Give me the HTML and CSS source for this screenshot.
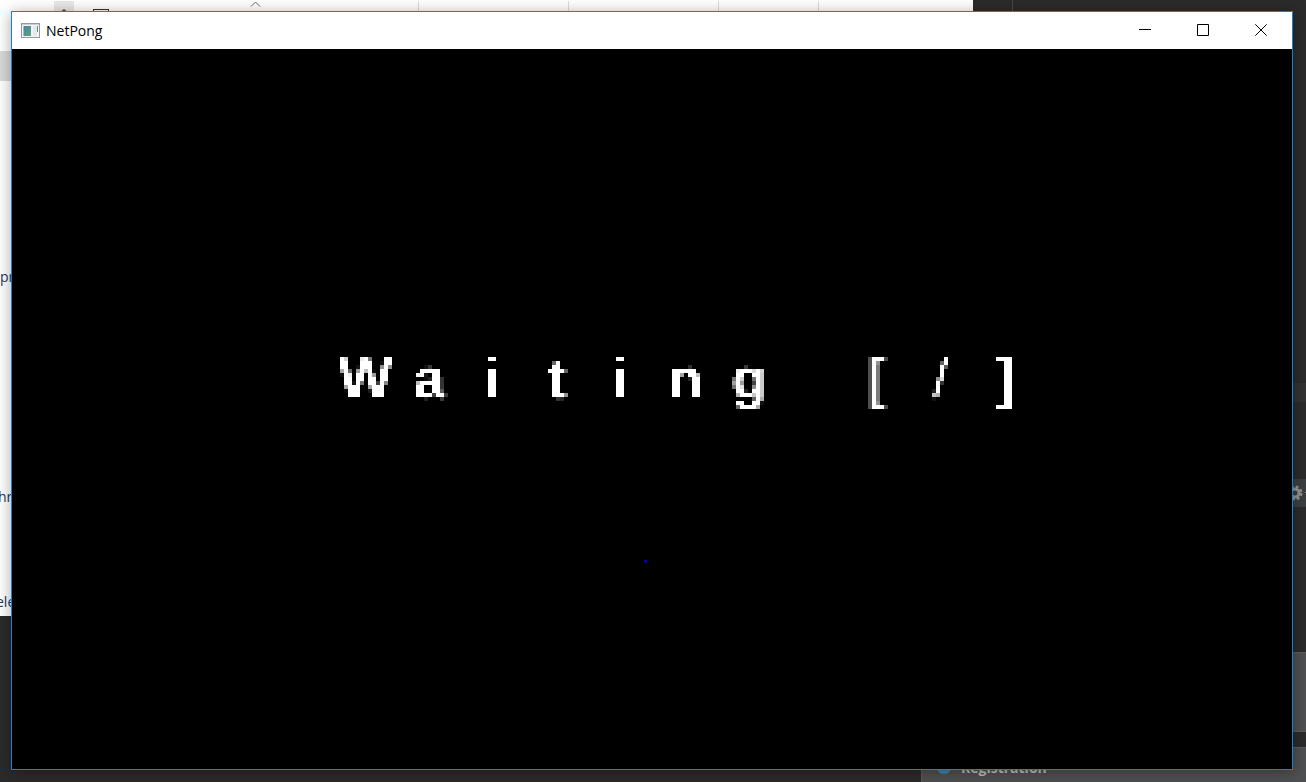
FILE: index.html
```html
<!DOCTYPE html>
<html lang="en">
<head>
<meta charset="utf-8">
<title>NetPong</title>
<link rel="stylesheet" href="styles.css">
</head>
<body>
<svg class="defs" width="0" height="0" aria-hidden="true">
  <!-- Averages 4x4 blocks, keeps one sample of each and spreads it over its block -->
  <filter id="pixel" filterUnits="userSpaceOnUse" primitiveUnits="userSpaceOnUse" x="0" y="-1" width="4000" height="80" color-interpolation-filters="sRGB">
    <feConvolveMatrix in="SourceGraphic" order="4" targetX="1" targetY="1" divisor="16" kernelMatrix="1 1 1 1 1 1 1 1 1 1 1 1 1 1 1 1"/>
    <feComponentTransfer result="average"><feFuncA type="linear" slope="2.4" intercept="-0.65"/></feComponentTransfer>
    <feFlood x="1" y="4" width="1" height="1" flood-color="#fff" result="dot"/>
    <feOffset in="dot" dx="0" dy="0" x="0" y="3" width="4" height="4"/>
    <feTile result="grid"/>
    <feComposite in="average" in2="grid" operator="in"/>
    <feConvolveMatrix order="4" targetX="2" targetY="2" divisor="1" kernelMatrix="1 1 1 1 1 1 1 1 1 1 1 1 1 1 1 1"/>
  </filter>
</svg>
<main class="desktop">
  <section class="explorer" aria-label="Files">
    <div class="columns">
      <span class="scroll"><svg width="20" height="12" viewBox="0 0 20 12"><path d="M5 12 L10 8 L15 12Z" fill="#505050"/></svg></span>
      <span class="check"></span>
      <svg class="sort" width="11" height="6" viewBox="0 0 11 6"><path d="M1 5.5 L5.500 1 L10 5.500" fill="none" stroke="#666"/></svg>
      <i class="line line-1"></i><i class="line line-2"></i><i class="line line-3"></i><i class="line line-4"></i>
    </div>
    <div class="selected"></div>
    <span class="label label-1">pr</span>
    <span class="label label-2">hr</span>
    <span class="label label-3">ele</span>
  </section>
  <div class="divider"></div>
  <div class="strip"></div>
  <div class="tools">
    <svg width="22" height="18" viewBox="0 0 22 18"><g fill="none" stroke="#929292"><circle cx="6" cy="9" r="4" stroke-width="3"/><circle cx="6" cy="9" r="6" stroke-width="3" stroke-dasharray="2.600 2.112"/></g><path d="M16 8h4v1h-4z" fill="#929292"/></svg>
  </div>
  <div class="notice notice-top"></div>
  <section class="notice notice-bottom">
    <svg width="16" height="16" viewBox="0 0 16 16"><circle cx="8" cy="8" r="8" fill="#3d84b0"/><path d="M7 3h2v2H7zM7 7h2v5H7z" fill="#eee"/></svg>
    <strong>Registration</strong>
  </section>

  <section class="window">
    <header class="titlebar">
      <svg class="app-icon" width="19" height="16" viewBox="0 0 19 16"><path d="M0 0h19v15H0z" fill="#9299a3"/><path d="M1 2h17v12H1z" fill="#f3f5f5"/><path d="M1 1h17v1H1z" fill="#c9ced3"/><path d="M2 3h8v10H2z" fill="#aab9bd"/><path d="M3 3h7v10H3z" fill="url(#screen)"/><path d="M12 3h4v10h-4z" fill="#e5e9ea"/><path d="M16 3h1v6h-1z" fill="#5a9692"/><defs><linearGradient id="screen" x2="1" y2="1"><stop stop-color="#4b83a6"/><stop offset="1" stop-color="#59a579"/></linearGradient></defs></svg>
      <span class="title">NetPong</span>
      <button class="control" aria-label="Minimize"><svg width="12" height="12" viewBox="0 0 12 12"><path d="M0 5h12v1H0z"/></svg></button>
      <button class="control" aria-label="Maximize"><svg width="12" height="12" viewBox="0 0 12 12"><path d="M.5 .5h11v11H.5z" fill="none" stroke="#000"/></svg></button>
      <button class="control" aria-label="Close"><svg width="12" height="12" viewBox="0 0 12 12"><path d="M.3 .3 L11.700 11.700 M11.700 .3 L.3 11.700" fill="none" stroke="#000"/></svg></button>
    </header>
    <div class="court">
      <h1 class="status"><span class="first">W</span><span>a</span><span>i</span><span>t</span><span>i</span><span>n</span><span>g</span><span> </span><span>[</span><span class="spinner">/</span><span>]</span></h1>
      <svg class="ball" width="3" height="3" viewBox="0 0 3 3"><path d="M0 0h3v3H0z" fill="#000070"/><path d="M1 0h1v3H1zM0 1h3v1H0z" fill="#0000c8"/></svg>
    </div>
  </section>
</main>
</body>
</html>
```
FILE: styles.css
```css
* { box-sizing: border-box; }
body { margin: 0; }
.defs { position: absolute; }
.desktop {
  position: relative;
  height: 100vh;
  overflow: hidden;
  background: #2b2b2b;
  font-family: "Open Sans", "Noto Sans", sans-serif;
}
.explorer {
  position: absolute;
  top: 0;
  left: 0;
  width: 973px;
  height: 616px;
  background: #fff;
}
.columns { position: relative; height: 12px; }
.scroll { position: absolute; left: 54px; top: 1px; width: 20px; height: 12px; background: #e8e8e8; }
.scroll svg { display: block; }
.check { position: absolute; left: 93px; top: 9px; width: 16px; height: 16px; border: 1px solid #333; }
.sort { position: absolute; left: 250px; top: 1px; }
.line { position: absolute; top: 1px; width: 1px; height: 12px; background: #dcdcdc; }
.line-1 { left: 418px; }
.line-2 { left: 568px; }
.line-3 { left: 718px; }
.line-4 { left: 818px; }
.selected { position: absolute; left: 0; top: 51px; width: 40px; height: 30px; background: #d9d9d9; }
.label { position: absolute; font-size: 14px; line-height: 20px; color: #1e395b; }
.label-1 { left: 0; top: 267px; }
.label-2 { left: -2px; top: 487px; }
.label-3 { left: -4px; top: 592px; }
.divider { position: absolute; left: 1012px; top: 0; width: 1px; height: 12px; background: #484848; }
.strip { position: absolute; right: 0; top: 383px; width: 20px; height: 19px; background: #333; }
.tools { position: absolute; right: 0; top: 479px; width: 17px; height: 28px; padding-top: 5px; background: #3c3f41; }
.tools svg { display: block; }
.notice { position: absolute; right: 0; background: #4e5052; border: 1px solid #5a5c5e; border-right: 0; }
.notice-top { top: 652px; width: 385px; height: 80px; }
.notice-bottom {
  top: 747px;
  width: 385px;
  height: 80px;
  display: flex;
  align-items: flex-start;
  gap: 9px;
  padding: 10px 14px;
  color: #bbb;
  font-size: 14px;
  line-height: 20px;
}
.window {
  position: absolute;
  inset: 11px 13px 12px 11px;
  display: flex;
  flex-direction: column;
  border: 1px solid #1b7fd4;
  background: #000;
  box-shadow: 0 2px 14px rgba(0, 0, 0, .35);
}
.titlebar { display: flex; align-items: center; height: 37px; padding: 0 2px 0 9px; background: #fff; }
.title { flex: 1; padding-left: 6px; font-size: 14px; line-height: 20px; color: #000; }
.control { display: grid; place-items: center; align-self: flex-start; width: 58px; height: 36px; padding: 0; border: 0; background: transparent; }
.court { flex: 1; display: grid; grid-template-rows: 297fr 64px 150fr 3px 206fr; }
.status {
  grid-row: 2;
  display: grid;
  grid-template-columns: repeat(20, 1fr);
  margin: 0;
  padding-left: 2px;
  font: bold 57px/64px "Liberation Sans", sans-serif;
  color: #fff;
  text-align: center;
  filter: url(#pixel);
}
.first { grid-column: 6; }
.spinner { font-weight: normal; }
.ball { grid-row: 4; justify-self: center; margin-right: 14px; }
```
